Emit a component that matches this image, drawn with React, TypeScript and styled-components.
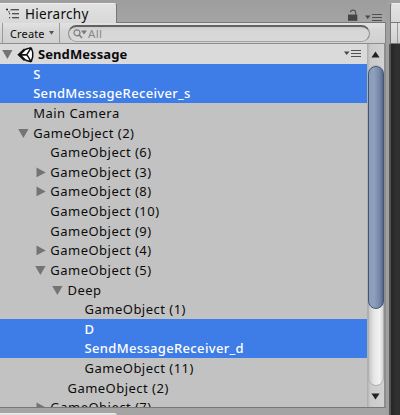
import React from 'react';
import styled, { createGlobalStyle } from 'styled-components';

const GlobalStyle = createGlobalStyle`
  * { box-sizing: border-box; }
  body { margin: 0; background: #a2a2a2; overflow: hidden; }
`;

const Window = styled.div`
  display: flex;
  width: 400px;
  height: 415px;
  overflow: hidden;
  background: #a2a2a2;
  font-family: 'Noto Sans', 'Open Sans', sans-serif;
  font-size: 13px;
  color: #0c0c0c;
`;

const Panel = styled.div`
  display: flex;
  flex-direction: column;
  width: 386px;
  height: 415px;
`;

const TabBar = styled.div`
  display: flex;
  flex-shrink: 0;
  height: 22px;
  padding-top: 3px;
  background: linear-gradient(#9d9d9d, #a4a4a4);
`;

const Tab = styled.div`
  display: flex;
  align-items: center;
  width: 117px;
  height: 20px;
  padding-left: 6px;
  border-top: 1px solid #eeeeee;
  border-right: 1px solid #777;
  border-radius: 0 3px 0 0;
  background: linear-gradient(#e2e2e2, #d8d8d8);
  z-index: 1;
`;

const TabTitle = styled.span`
  margin-left: 5px;
  line-height: 18px;
  font-size: 13.5px;
  letter-spacing: 0.3px;
`;

const TabActions = styled.div`
  display: flex;
  align-items: flex-start;
  gap: 7px;
  margin-left: auto;
  padding: 6px 4px 0 0;
`;

const Toolbar = styled.div`
  display: flex;
  flex-shrink: 0;
  align-items: center;
  height: 22px;
  border-top: 1px solid #777;
  border-right: 1px solid #818181;
  border-bottom: 1px solid #8e8e8e;
  background: linear-gradient(#e2e2e2, #d6d6d6 40%, #d0d0d0);
`;

const CreateButton = styled.div`
  display: flex;
  align-items: center;
  justify-content: space-between;
  width: 58px;
  height: 20px;
  margin-left: 2px;
  padding: 0 5px 0 7px;
  border: solid #9a9a9a;
  border-width: 0 1px;
  font-size: 11px;
  letter-spacing: 0.15px;
`;

const SearchField = styled.div`
  display: flex;
  align-items: center;
  width: 302px;
  height: 17px;
  margin-left: 8px;
  padding-left: 4px;
  border: 1px solid #8d8d8d;
  border-top: 2px solid #616161;
  border-bottom-color: #a3a3a3;
  border-radius: 9px;
  background: linear-gradient(#c9c9c9, #d6d6d6 3px, #d9d9d9);
  color: #898989;
  font-size: 11.5px;
`;

const SearchPlaceholder = styled.span`
  margin-left: 1px;
  line-height: 13px;
  padding-bottom: 1px;
  letter-spacing: 0.3px;
`;

const Body = styled.div`
  display: flex;
  flex-shrink: 0;
  height: 364px;
  border-right: 2px solid #8d8d8d;
  border-bottom: 1px solid #777;
  overflow: hidden;
`;

const Tree = styled.div`
  width: 367px;
  background: #c2c2c2;
  overflow: hidden;
`;

const SceneHeader = styled.div`
  display: flex;
  align-items: center;
  gap: 4px;
  height: 20px;
  padding: 0 6px 0 2px;
  background: #dadada;
`;

const SceneName = styled.span`
  flex: 1;
  font-weight: 700;
  line-height: 20px;
  letter-spacing: 0.08px;
`;

const Row = styled.div<{ $depth: number; $selected?: boolean }>`
  display: flex;
  align-items: center;
  height: 19.62px;
  padding-top: 1px;
  padding-left: ${({ $depth }) => 1 + $depth * 17.15}px;
  background: ${({ $selected }) => ($selected ? '#3e7de7' : 'transparent')};
  color: ${({ $selected }) => ($selected ? '#fff' : '#0c0c0c')};
  font-weight: ${({ $selected }) => ($selected ? 500 : 400)};
  letter-spacing: ${({ $selected }) => ($selected ? 0.33 : 0.48)}px;
  white-space: nowrap;
`;

const RowLabel = styled.span`
  line-height: 19px;
`;

const ArrowSlot = styled.span`
  display: flex;
  align-items: center;
  width: 15px;
`;

const ScrollBar = styled.div`
  display: flex;
  flex-direction: column;
  align-items: center;
  width: 17px;
  background: linear-gradient(90deg, #aaa, #cacaca 3px, #d2d2d2);
`;

const ScrollButton = styled.div`
  display: flex;
  align-items: center;
  justify-content: center;
  height: 21px;
`;

const Track = styled.div`
  width: 16px;
  height: 321px;
  border: 1px solid #b0b0b0;
  border-radius: 8px;
  background: linear-gradient(90deg, #c5c5c5, #e6e6e6 35%, #f2f2f2 75%, #d5d5d5);
`;

const Thumb = styled.div`
  width: 16px;
  height: 243px;
  margin: 0 -1px;
  border: 1.5px solid #435574;
  border-radius: 8px;
  background: linear-gradient(90deg, #8b9cbb, #8fa0bd 35%, #7587a8 75%, #536789);
`;

const Footer = styled.div`
  flex: 1;
  padding-top: 5px;
  background: #a4a4a4;
  overflow: hidden;
`;

const LowerTab = styled.div`
  width: 117px;
  height: 4px;
  border-top: 1px solid #eee;
  border-radius: 0 3px 0 0;
  background: #dfdfdf;
`;

const Neighbor = styled.div`
  width: 14px;
  padding-top: 3px;
  background: #a0a0a0;
`;

const NeighborTab = styled.div`
  height: 19px;
  margin-left: 4px;
  border-left: 1px solid #777;
  border-top: 1px solid #eee;
  border-radius: 3px 0 0 0;
  background: linear-gradient(#e2e2e2, #d8d8d8);
`;

const NeighborToolbar = styled.div`
  height: 22px;
  margin-left: 4px;
  padding-left: 6px;
  border-left: 1px solid #777;
  border-top: 1px solid #777;
  border-bottom: 1px solid #777;
  background: linear-gradient(#e2e2e2, #d0d0d0);
`;

const ToolbarDivider = styled.div`
  width: 1px;
  height: 20px;
  background: #999;
`;

const DarkView = styled.div`
  height: 371px;
  margin-left: 3px;
  border-left: 2px solid #555;
  background: linear-gradient(90deg, #242424, #303030 5px);
`;

const ListIcon = () => (
  <svg width="14" height="12" viewBox="0 0 14 12" stroke="#222" strokeWidth="1.1" fill="none">
    <path d="M4.5 1.8h8.5M6 5.8h7M6 9.8h7" />
    <path d="M0 1.5h2M1 .5v2M3 3.2v1.2M3 5.8h1.2M3 9.8h1.2" />
  </svg>
);

const LockIcon = () => (
  <svg width="10" height="13" viewBox="0 0 10 13">
    <rect x="0" y="5.6" width="9.3" height="6.2" fill="#444" />
    <path d="M7.6 6V3.3C7.6 0.5 2.7 0.3 2.4 3.3" fill="none" stroke="#555" strokeWidth="1.2" />
  </svg>
);

const MenuIcon = ({ lowered }: { lowered?: boolean }) => (
  <svg width="17" height={lowered ? 14 : 10} viewBox={lowered ? '0 -4 17 14' : '0 0 17 10'}>
    <path d="M0 2.5h5.5L2.7 6Z" fill="#484848" />
    <path d="M7 1.5h10M7 4.5h10M7 7.5h10" stroke="#505050" strokeWidth="1.1" />
  </svg>
);

const CaretIcon = () => (
  <svg width="5" height="4" viewBox="0 0 5 4">
    <path d="M0 0h5L2.5 3.8Z" fill="#555" />
  </svg>
);

const SearchIcon = () => (
  <svg width="14" height="11" viewBox="0 0 14 11">
    <circle cx="4" cy="4.8" r="3" fill="none" stroke="#7d7d7d" strokeWidth="1.2" />
    <path d="M6.2 7 9 10" stroke="#7d7d7d" strokeWidth="1.6" />
    <path d="M8 2.6h6L11 6.4Z" fill="#777" />
  </svg>
);

const UnityIcon = () => (
  <svg width="17" height="17" viewBox="0 0 17 17">
    <path d="M1 8.7 14.2 1.2 16 8.7 14.4 16Z" fill="#fff" />
    <path
      d="M9.8 8.7 14.2 1.6M9.8 8.7l4.4 7M9.8 8.7H3M14.2 1.6 15.7 6.4v4.4l-1.5 4.9M14.2 1.6 8.5 3.2M14.2 15.7 8.5 14.2"
      fill="none"
      stroke="#111"
      strokeWidth="1.5"
      strokeLinejoin="round"
    />
    <path d="M0.3 8.7 6.7 2.7l3 .4L4.8 7.9h5v1.6h-5l4.9 4.8-3 .4Z" fill="#111" />
  </svg>
);

const Foldout = ({ open }: { open: boolean }) => (
  <svg width="11" height="11" viewBox="0 0 11 11">
    <path d={open ? 'M0.2 1h10.3L5.4 10Z' : 'M1.5 0.6 10.7 5.4 1.5 10.2Z'} fill="#747474" />
  </svg>
);

const ScrollArrow = ({ up }: { up?: boolean }) => (
  <svg width="9" height="7" viewBox="0 0 9 7">
    <path d={up ? 'M0.4 6.5h8.2L4.5 0.5Z' : 'M0.4 0.5h8.2L4.5 6.5Z'} fill="#222" />
  </svg>
);

type Item = { name: string; depth: number; open?: boolean; selected?: boolean };

const items: Item[] = [
  { name: 'S', depth: 1, selected: true },
  { name: 'SendMessageReceiver_s', depth: 1, selected: true },
  { name: 'Main Camera', depth: 1 },
  { name: 'GameObject (2)', depth: 1, open: true },
  { name: 'GameObject (6)', depth: 2 },
  { name: 'GameObject (3)', depth: 2, open: false },
  { name: 'GameObject (8)', depth: 2, open: false },
  { name: 'GameObject (10)', depth: 2 },
  { name: 'GameObject (9)', depth: 2 },
  { name: 'GameObject (4)', depth: 2, open: false },
  { name: 'GameObject (5)', depth: 2, open: true },
  { name: 'Deep', depth: 3, open: true },
  { name: 'GameObject (1)', depth: 4 },
  { name: 'D', depth: 4, selected: true },
  { name: 'SendMessageReceiver_d', depth: 4, selected: true },
  { name: 'GameObject (11)', depth: 4 },
  { name: 'GameObject (2)', depth: 3 },
  { name: 'GameObject (7)', depth: 2, open: false },
];

export default function App() {
  return (
    <>
      <GlobalStyle />
      <Window>
        <Panel>
          <TabBar>
            <Tab>
              <ListIcon />
              <TabTitle>Hierarchy</TabTitle>
            </Tab>
            <TabActions>
              <LockIcon />
              <MenuIcon lowered />
            </TabActions>
          </TabBar>
          <Toolbar>
            <CreateButton>
              Create
              <CaretIcon />
            </CreateButton>
            <SearchField>
              <SearchIcon />
              <SearchPlaceholder>All</SearchPlaceholder>
            </SearchField>
          </Toolbar>
          <Body>
            <Tree>
              <SceneHeader>
                <Foldout open />
                <UnityIcon />
                <SceneName>SendMessage</SceneName>
                <MenuIcon />
              </SceneHeader>
              {items.map((item, i) => (
                <Row key={i} $depth={item.depth} $selected={item.selected}>
                  <ArrowSlot>{item.open !== undefined && <Foldout open={item.open} />}</ArrowSlot>
                  <RowLabel>{item.name}</RowLabel>
                </Row>
              ))}
            </Tree>
            <ScrollBar>
              <ScrollButton>
                <ScrollArrow up />
              </ScrollButton>
              <Track>
                <Thumb />
              </Track>
              <ScrollButton>
                <ScrollArrow />
              </ScrollButton>
            </ScrollBar>
          </Body>
          <Footer>
            <LowerTab />
          </Footer>
        </Panel>
        <Neighbor>
          <NeighborTab />
          <NeighborToolbar>
            <ToolbarDivider />
          </NeighborToolbar>
          <DarkView />
        </Neighbor>
      </Window>
    </>
  );
}
